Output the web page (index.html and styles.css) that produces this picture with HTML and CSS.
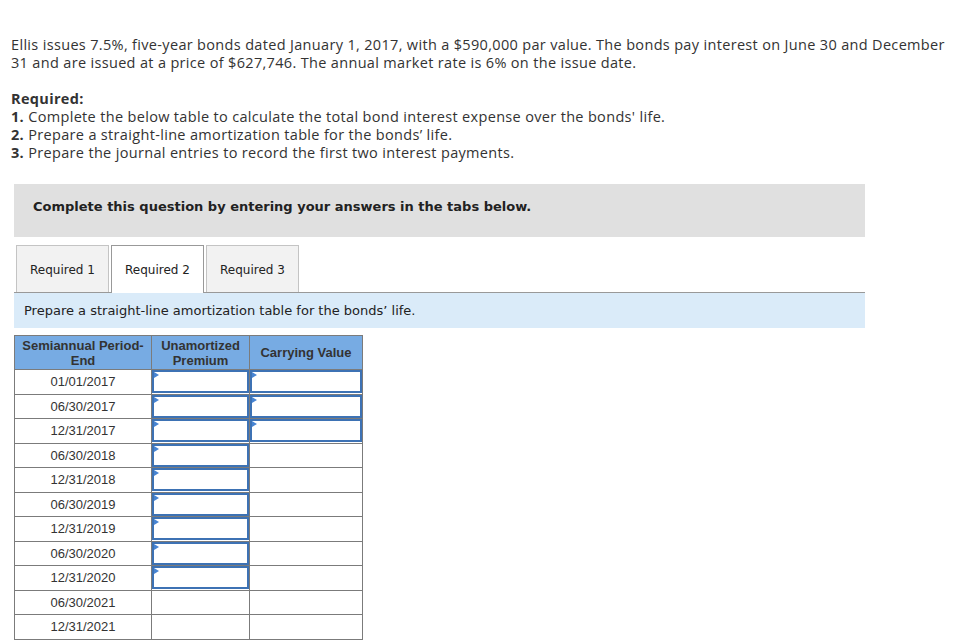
FILE: index.html
```html
<!DOCTYPE html>
<html>

<head>
    <meta charset="UTF-8" />
    <title>Bonds question</title>
    <link rel="stylesheet" href="styles.css">
</head>

<body>
    <div class="question">
        <p class="intro">Ellis issues 7.5%, five-year bonds dated January 1, 2017, with a $590,000 par value. The bonds pay interest on June 30 and December 31 and are issued at a price of $627,746. The annual market rate is 6% on the issue date.</p>
        <p class="req-title">Required:</p>
        <p class="req"><b>1.</b> Complete the below table to calculate the total bond interest expense over the bonds' life.</p>
        <p class="req"><b>2.</b> Prepare a straight-line amortization table for the bonds’ life.</p>
        <p class="req"><b>3.</b> Prepare the journal entries to record the first two interest payments.</p>
    </div>

    <div class="panel">
        <div class="notice">Complete this question by entering your answers in the tabs below.</div>

        <ul class="tabs">
            <li class="tab">Required 1</li>
            <li class="tab active">Required 2</li>
            <li class="tab">Required 3</li>
        </ul>

        <div class="prompt">Prepare a straight-line amortization table for the bonds’ life.</div>

        <table class="amort">
            <thead>
                <tr>
                    <th class="c1">Semiannual Period-<br>End</th>
                    <th class="c2">Unamortized<br>Premium</th>
                    <th class="c3">Carrying Value</th>
                </tr>
            </thead>
            <tbody id="rows"></tbody>
        </table>
    </div>

    <script type="text/javascript">
        var dates = ['01/01/2017', '06/30/2017', '12/31/2017', '06/30/2018', '12/31/2018', '06/30/2019',
            '12/31/2019', '06/30/2020', '12/31/2020', '06/30/2021', '12/31/2021']
        var holder = document.getElementById('rows')
        var str = ''
        var box = '<div class="entry"><span class="flag"></span></div>'
        for (var i = 0; i < dates.length; i++) {
            str += '<tr><td>' + dates[i] + '</td>'
            str += '<td>' + (i < 9 ? box : '') + '</td>' //premium inputs until 12/31/2020
            str += '<td>' + (i < 3 ? box : '') + '</td></tr>' //carrying value for first three
        }
        holder.innerHTML = str
    </script>
</body>

</html>
```

FILE: styles.css
```css
* {
    margin: 0;
    padding: 0;
}

body {
    background: #fff;
    color: #333;
    padding: 36px 0 0 0;
}

.question {
    padding: 0 0 0 11px;
    font-family: "Open Sans", sans-serif;
    font-size: 14.5px;
    letter-spacing: 0.33px;
    line-height: 18px;
    color: #333;
}

.intro {
    margin-bottom: 18px;
}

.req-title {
    font-weight: bold;
}

.req b {
    font-weight: bold;
}

.panel {
    margin: 22px 0 0 14px;
    width: 851px;
}

.notice {
    background: #e0e0e0;
    font-family: "DejaVu Sans", Verdana, sans-serif;
    font-size: 13px;
    font-weight: bold;
    line-height: 16px;
    color: #222;
    padding: 15px 19px 22px 19px;
}

.tabs {
    list-style-type: none;
    display: flex;
    gap: 2px;
    margin-top: 8px;
    padding-left: 2px;
    border-bottom: 1px solid #999;
    height: 47px;
}

.tab {
    width: 93px;
    box-sizing: border-box;
    border: 1px solid #c4c4c4;
    border-bottom: none;
    background: #f2f2f2;
    font-family: "DejaVu Sans", Verdana, sans-serif;
    font-size: 12px;
    color: #222;
    text-align: center;
    line-height: 46px;
    padding-top: 1px;
}

.tab.active {
    background: #fff;
    border-color: #999;
    height: 48px;
}

.prompt {
    background: #daebf9;
    font-family: "DejaVu Sans", Verdana, sans-serif;
    font-size: 13px;
    color: #222;
    line-height: 35px;
    padding-left: 10px;
}

.amort {
    margin-top: 7px;
    border-collapse: collapse;
    font-family: "Liberation Sans", Arial, sans-serif;
    font-size: 13px;
    color: #333;
}

.amort th {
    background: #77abe3;
    border: 1px solid #7b7b7b;
    font-weight: bold;
    line-height: 15px;
    height: 33px;
    padding: 0;
}

.amort .c1 {
    width: 136px;
}

.amort .c2 {
    width: 97px;
}

.amort .c3 {
    width: 112px;
}

.amort td {
    border: 1px solid #7b7b7b;
    height: 23.5px;
    padding: 0;
    text-align: center;
}

.entry {
    position: relative;
    height: 23px;
    box-sizing: border-box;
    border: 2px solid #3d72b4;
    background: #fff;
}

.flag {
    position: absolute;
    left: 0;
    top: 0;
    width: 0;
    height: 0;
    border-top: 3px solid transparent;
    border-bottom: 3px solid transparent;
    border-left: 5px solid #4784d2;
}
```
